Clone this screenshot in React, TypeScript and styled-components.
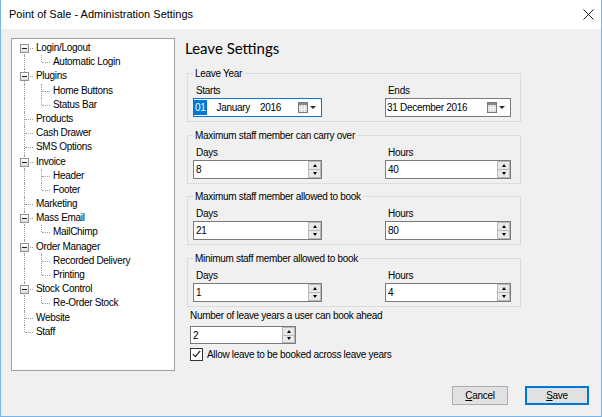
import React from 'react';
import styled, { createGlobalStyle, css } from 'styled-components';

const GlobalStyle = createGlobalStyle`
  html, body { margin: 0; padding: 0; background: #ffffff; }
  body { font-family: "Liberation Sans", Arial, sans-serif; font-size: 10px; letter-spacing: -0.3px; color: #000; }
  * { box-sizing: border-box; }
`;

const Window = styled.div`
  width: 602px;
  height: 417px;
  display: flex;
  flex-direction: column;
  background: #f0f0f0;
  border: 1px solid #7ab6ea;
  border-top: none;
`;

const TitleBar = styled.div`
  height: 29px;
  flex: none;
  background: #ffffff;
  display: flex;
  align-items: center;
  justify-content: space-between;
  padding: 0 7px 1px 8px;
`;

const TitleText = styled.span`
  font-family: "Liberation Sans", Arial, sans-serif;
  font-size: 11px;
  letter-spacing: 0;
  color: #000;
`;

const CloseIcon = styled.svg`
  display: block;
  width: 11px;
  height: 11px;
`;

const Body = styled.div`
  flex: 1;
  display: grid;
  grid-template-columns: 164px 1fr;
  grid-template-rows: 333px 1fr;
  column-gap: 10px;
  padding: 9px 12px 0 10px;
`;

const Tree = styled.div`
  grid-column: 1;
  grid-row: 1;
  background: #ffffff;
  border: 1px solid #a0a0a0;
  padding-top: 2px;
  overflow: hidden;
`;

const TreeRow = styled.div`
  height: 14.2px;
  display: flex;
  align-items: stretch;
`;

type VLine = 'full' | 'top' | 'bottom' | 'none';

const Connector = styled.div<{ $width: number; $x: number; $v: VLine; $h: number }>`
  position: relative;
  flex: none;
  width: ${p => p.$width}px;
  &::before {
    content: '';
    position: absolute;
    left: ${p => p.$x}px;
    border-left: 1px dotted #a0a0a0;
    ${p => p.$v === 'none' && css`display: none;`}
    ${p => p.$v === 'full' && css`top: 0; bottom: 0;`}
    ${p => p.$v === 'top' && css`top: 0; height: 7px;`}
    ${p => p.$v === 'bottom' && css`top: 7px; bottom: 0;`}
  }
  &::after {
    content: '';
    position: absolute;
    top: 7px;
    left: ${p => p.$x + 1}px;
    width: ${p => p.$h}px;
    border-top: 1px dotted #a0a0a0;
    ${p => p.$h === 0 && css`display: none;`}
  }
`;

const Expander = styled.span`
  position: absolute;
  z-index: 1;
  left: 8px;
  top: 3px;
  width: 9px;
  height: 9px;
  border: 1px solid #919191;
  background: linear-gradient(#ffffff, #dedede);
  display: flex;
  align-items: center;
  justify-content: center;
  &::before {
    content: '';
    width: 5px;
    height: 1px;
    background: #1e1e1e;
  }
`;

const TreeLabel = styled.span`
  line-height: 14px;
  white-space: nowrap;
  padding-left: 1px;
`;

const Panel = styled.div`
  grid-column: 2;
  grid-row: 1 / span 1;
  display: flex;
  flex-direction: column;
  align-items: flex-start;
`;

const PanelTitle = styled.h1`
  margin: 0 0 9px 0;
  height: 20px;
  font-family: Lato, "Liberation Sans", sans-serif;
  font-weight: normal;
  font-size: 15px;
  letter-spacing: 0;
  line-height: 20px;
  color: #000;
`;

const GroupBox = styled.fieldset`
  width: 334px;
  min-width: 0;
  margin: 0 0 0 2px;
  padding: 4px 9px 4px 5px;
  border: 1px solid #dcdcdc;
  & + & {
    margin-top: 6.5px;
  }
`;

const Legend = styled.legend`
  padding: 0 2px;
  line-height: 13px;
`;

const FieldGrid = styled.div`
  display: grid;
  grid-template-columns: 129px 126px;
  column-gap: 63px;
`;

const Field = styled.div`
  display: flex;
  flex-direction: column;
`;

const FieldLabel = styled.div`
  height: 14px;
  line-height: 14px;
  padding-left: 3px;
`;

const InputBox = styled.div<{ $focused?: boolean; $width?: number; $height?: number }>`
  height: ${p => p.$height ?? 19}px;
  width: ${p => (p.$width ? `${p.$width}px` : '100%')};
  background: #ffffff;
  border: 1px solid ${p => (p.$focused ? '#0078d7' : '#7a7a7a')};
  display: flex;
  align-items: stretch;
`;

const DateText = styled.div`
  flex: 1;
  display: flex;
  align-items: center;
  white-space: nowrap;
`;

const Selected = styled.span`
  background: #0078d7;
  color: #ffffff;
  padding: 0 1px;
  line-height: 15px;
`;

const DatePart = styled.span<{ $gap: number }>`
  margin-left: ${p => p.$gap}px;
`;

const DropButton = styled.div`
  flex: none;
  display: flex;
  align-items: center;
  gap: 2px;
  padding-right: 5px;
`;

const CalendarIcon = styled.svg`
  display: block;
  width: 10px;
  height: 11px;
`;

const Caret = styled.span`
  width: 0;
  height: 0;
  border-left: 3px solid transparent;
  border-right: 3px solid transparent;
  border-top: 3px solid #2b2b2b;
`;

const ValueText = styled.div`
  flex: 1;
  display: flex;
  align-items: center;
  padding-left: 2px;
`;

const Spinner = styled.div`
  flex: none;
  width: 14px;
  display: flex;
  flex-direction: column;
  border-left: 1px solid #ffffff;
`;

const SpinButton = styled.div<{ $up?: boolean }>`
  flex: 1;
  display: flex;
  align-items: center;
  justify-content: center;
  background: #e9e9e9;
  border: 1px solid #b9b9b9;
  ${p => !p.$up && css`margin-top: -1px;`}
  &::before {
    content: '';
    width: 0;
    height: 0;
    border-left: 2.5px solid transparent;
    border-right: 2.5px solid transparent;
    ${p => (p.$up ? css`border-bottom: 3px solid #000;` : css`border-top: 3px solid #000;`)}
  }
`;

const PlainLabel = styled.div`
  margin: 2.5px 0 0 5px;
  height: 14px;
  line-height: 14px;
`;

const StandaloneInput = styled.div`
  margin: 3px 0 0 5px;
`;

const CheckRow = styled.label`
  margin: 3px 0 0 5px;
  display: flex;
  align-items: center;
  gap: 4px;
  height: 14px;
`;

const CheckBox = styled.span`
  width: 13px;
  height: 13px;
  border: 1px solid #333333;
  background: #ffffff;
  display: flex;
  align-items: center;
  justify-content: center;
`;

const Footer = styled.div`
  grid-column: 1 / -1;
  grid-row: 2;
  display: flex;
  justify-content: flex-end;
  align-items: flex-start;
  gap: 17px;
  padding-top: 15px;
`;

const Button = styled.button<{ $default?: boolean; $width: number }>`
  width: ${p => p.$width}px;
  height: 19px;
  padding: 0;
  font-family: "Liberation Sans", Arial, sans-serif;
  font-size: 10px;
  letter-spacing: -0.3px;
  color: #000;
  background: #e1e1e1;
  border: 1px solid ${p => (p.$default ? '#0078d7' : '#adadad')};
  ${p => p.$default && css`box-shadow: inset 0 0 0 1px #0078d7;`}
`;

const Mnemonic = styled.span`
  text-decoration: underline;
`;

type Node = { label: string; children?: string[] };

const nodes: Node[] = [
  { label: 'Login/Logout', children: ['Automatic Login'] },
  { label: 'Plugins', children: ['Home Buttons', 'Status Bar'] },
  { label: 'Products' },
  { label: 'Cash Drawer' },
  { label: 'SMS Options' },
  { label: 'Invoice', children: ['Header', 'Footer'] },
  { label: 'Marketing' },
  { label: 'Mass Email', children: ['MailChimp'] },
  { label: 'Order Manager', children: ['Recorded Delivery', 'Printing'] },
  { label: 'Stock Control', children: ['Re-Order Stock'] },
  { label: 'Website' },
  { label: 'Staff' },
];

function TreeView() {
  const rows: React.ReactNode[] = [];
  nodes.forEach((n, i) => {
    const first = i === 0;
    const last = i === nodes.length - 1;
    const trunk: VLine = first ? 'bottom' : last ? 'top' : 'full';
    rows.push(
      <TreeRow key={n.label}>
        <Connector $width={23} $x={12} $v={trunk} $h={8}>
          {n.children && <Expander />}
        </Connector>
        <TreeLabel>{n.label}</TreeLabel>
      </TreeRow>
    );
    (n.children || []).forEach((c, j, arr) => {
      rows.push(
        <TreeRow key={n.label + c}>
          <Connector $width={23} $x={12} $v="full" $h={0} />
          <Connector $width={17} $x={6} $v={j === arr.length - 1 ? 'top' : 'full'} $h={8} />
          <TreeLabel>{c}</TreeLabel>
        </TreeRow>
      );
    });
  });
  return <Tree>{rows}</Tree>;
}

function Calendar() {
  return (
    <CalendarIcon viewBox="0 0 10 11">
      <rect x="0.5" y="0.5" width="9" height="10" fill="#d9d9d9" stroke="#7a7a7a" />
      <rect x="1" y="1" width="8" height="2" fill="#8a8a8a" />
      <path d="M1 5.5h8M1 7.5h8M3.5 3v7M6.5 3v7" stroke="#f4f4f4" strokeWidth="1" />
    </CalendarIcon>
  );
}

function DatePicker({ focused, children }: { focused?: boolean; children: React.ReactNode }) {
  return (
    <InputBox $focused={focused}>
      <DateText>{children}</DateText>
      <DropButton>
        <Calendar />
        <Caret />
      </DropButton>
    </InputBox>
  );
}

function NumberBox({ value, width, height }: { value: string; width?: number; height?: number }) {
  return (
    <InputBox $width={width} $height={height}>
      <ValueText>{value}</ValueText>
      <Spinner>
        <SpinButton $up />
        <SpinButton />
      </Spinner>
    </InputBox>
  );
}

function DaysHoursGroup({ title, days, hours }: { title: string; days: string; hours: string }) {
  return (
    <GroupBox>
      <Legend>{title}</Legend>
      <FieldGrid>
        <Field>
          <FieldLabel>Days</FieldLabel>
          <NumberBox value={days} />
        </Field>
        <Field>
          <FieldLabel>Hours</FieldLabel>
          <NumberBox value={hours} />
        </Field>
      </FieldGrid>
    </GroupBox>
  );
}

export default function App() {
  return (
    <>
      <GlobalStyle />
      <Window>
        <TitleBar>
          <TitleText>Point of Sale - Administration Settings</TitleText>
          <CloseIcon viewBox="0 0 11 11">
            <path d="M0.5 0.5L10.5 10.5M10.5 0.5L0.5 10.5" stroke="#1a1a1a" strokeWidth="1" fill="none" />
          </CloseIcon>
        </TitleBar>
        <Body>
          <TreeView />
          <Panel>
            <PanelTitle>Leave Settings</PanelTitle>
            <GroupBox>
              <Legend>Leave Year</Legend>
              <FieldGrid>
                <Field>
                  <FieldLabel>Starts</FieldLabel>
                  <DatePicker focused>
                    <Selected>01</Selected>
                    <DatePart $gap={10}>January</DatePart>
                    <DatePart $gap={10}>2016</DatePart>
                  </DatePicker>
                </Field>
                <Field>
                  <FieldLabel>Ends</FieldLabel>
                  <DatePicker>
                    <DatePart $gap={1}>31 December 2016</DatePart>
                  </DatePicker>
                </Field>
              </FieldGrid>
            </GroupBox>
            <DaysHoursGroup title="Maximum staff member can carry over" days="8" hours="40" />
            <DaysHoursGroup title="Maximum staff member allowed to book" days="21" hours="80" />
            <DaysHoursGroup title="Minimum staff member allowed to book" days="1" hours="4" />
            <PlainLabel>Number of leave years a user can book ahead</PlainLabel>
            <StandaloneInput>
              <NumberBox value="2" width={106} height={18} />
            </StandaloneInput>
            <CheckRow>
              <CheckBox>
                <svg width="9" height="8" viewBox="0 0 9 8">
                  <path d="M0.8 4.2L3.3 6.7L8.2 0.8" stroke="#222" strokeWidth="1.2" fill="none" />
                </svg>
              </CheckBox>
              Allow leave to be booked across leave years
            </CheckRow>
          </Panel>
          <Footer>
            <Button $width={56}>
              <Mnemonic>C</Mnemonic>ancel
            </Button>
            <Button $width={64} $default>
              <Mnemonic>S</Mnemonic>ave
            </Button>
          </Footer>
        </Body>
      </Window>
    </>
  );
}
